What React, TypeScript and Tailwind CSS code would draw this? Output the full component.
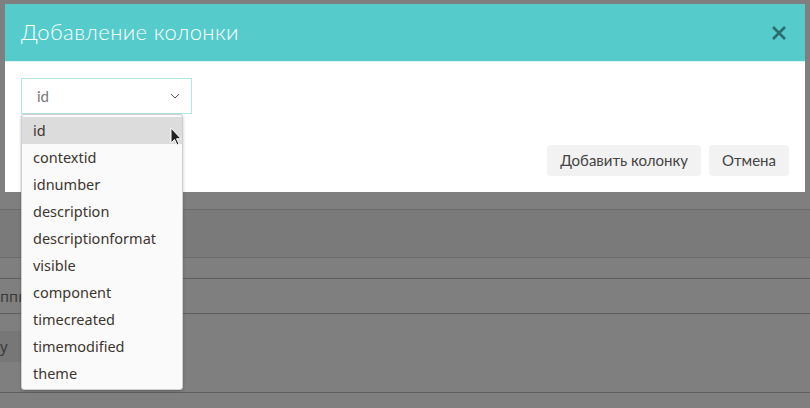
import React from "react";

const fields = [
  "id",
  "contextid",
  "idnumber",
  "description",
  "descriptionformat",
  "visible",
  "component",
  "timecreated",
  "timemodified",
  "theme",
];

function PageBehind() {
  return (
    <div className="h-[408px] w-[810px] bg-[#7f7f7f] text-[#3a3a3a] [font-family:'Noto_Sans',sans-serif]">
      <div className="h-[210px] border-b border-[#6c6c6c]" />
      <div className="h-[48px] border-b border-[#6c6c6c] bg-[#7a7a7a]" />
      <div className="h-[21px] border-b border-[#5f5f5f]" />
      <div className="flex h-[35px] items-center border-b border-[#5f5f5f] text-[15px] leading-none">
        <span>ппы</span>
      </div>
      <div className="flex h-[78px] items-start pt-[17px]">
        <div className="flex h-[31px] w-[22px] items-center bg-[#777777] text-[15px]">
          <span>у</span>
        </div>
      </div>
      <div className="border-t border-[#5f5f5f]" />
    </div>
  );
}

function Chevron() {
  return (
    <svg width="10" height="6" viewBox="0 0 10 6" fill="none">
      <path d="M1 1l4 4 4-4" stroke="#555" strokeWidth="1" />
    </svg>
  );
}

function Cursor() {
  return (
    <svg width="12" height="20" viewBox="0 0 12 20">
      <path d="M1 1v15l3.5-3.5 2.5 5.5 2-1-2.5-5.2H11z" fill="#222" stroke="#fff" strokeWidth="1" />
    </svg>
  );
}

function Modal() {
  return (
    <div className="absolute left-[5px] top-[4px] w-[800px] bg-white">
      <div className="flex h-[58px] items-center justify-between border-b border-[#dff4f4] bg-[#55cbcb] pl-[16px] pr-[16px]">
        <h2 className="pb-[2px] text-[22px] font-light tracking-[0.4px] text-white [font-family:Lato,'Open_Sans',sans-serif]">
          Добавление колонки
        </h2>
        <svg width="16" height="16" viewBox="0 0 16 16" className="mr-[2px]">
          <path d="M2 2l12 12M14 2L2 14" stroke="#2c6c6c" strokeWidth="2.6" />
        </svg>
      </div>
      <div className="relative h-[130px] px-[16px] pt-[16px]">
        <div className="flex h-[36px] w-[171px] items-center justify-between border border-[#b3e6e6] pl-[15px] pr-[11px] text-[15px] text-[#777] [font-family:Lato,sans-serif]">
          <span>id</span>
          <Chevron />
        </div>
        <div className="absolute bottom-[16px] right-[16px] flex gap-[8px] text-[15px] text-[#444] [font-family:Lato,sans-serif]">
          <button className="h-[31px] rounded-[4px] bg-[#f2f2f2] px-[13px]">Добавить колонку</button>
          <button className="h-[31px] rounded-[4px] bg-[#f2f2f2] px-[13px]">Отмена</button>
        </div>
      </div>
    </div>
  );
}

function FieldList() {
  return (
    <div className="absolute left-[21px] top-[114px] w-[162px] rounded-[3px] border border-[#cfcfcf] bg-[#fafafa] py-[2px] shadow-[0_1px_3px_rgba(0,0,0,0.25)] [font-family:'Noto_Sans',sans-serif]">
      {fields.map((f, i) => (
        <div
          key={f}
          className={
            "relative flex h-[27px] items-center pl-[11px] text-[14.5px] text-[#3c3530] " +
            (i === 0 ? "bg-[#dcdcdc]" : "")
          }
        >
          {f}
          {i === 0 && (
            <span className="absolute left-[148px] top-[10px]">
              <Cursor />
            </span>
          )}
        </div>
      ))}
    </div>
  );
}

export default function App() {
  return (
    <div className="relative h-[408px] w-[810px] overflow-hidden">
      <PageBehind />
      <Modal />
      <FieldList />
    </div>
  );
}
